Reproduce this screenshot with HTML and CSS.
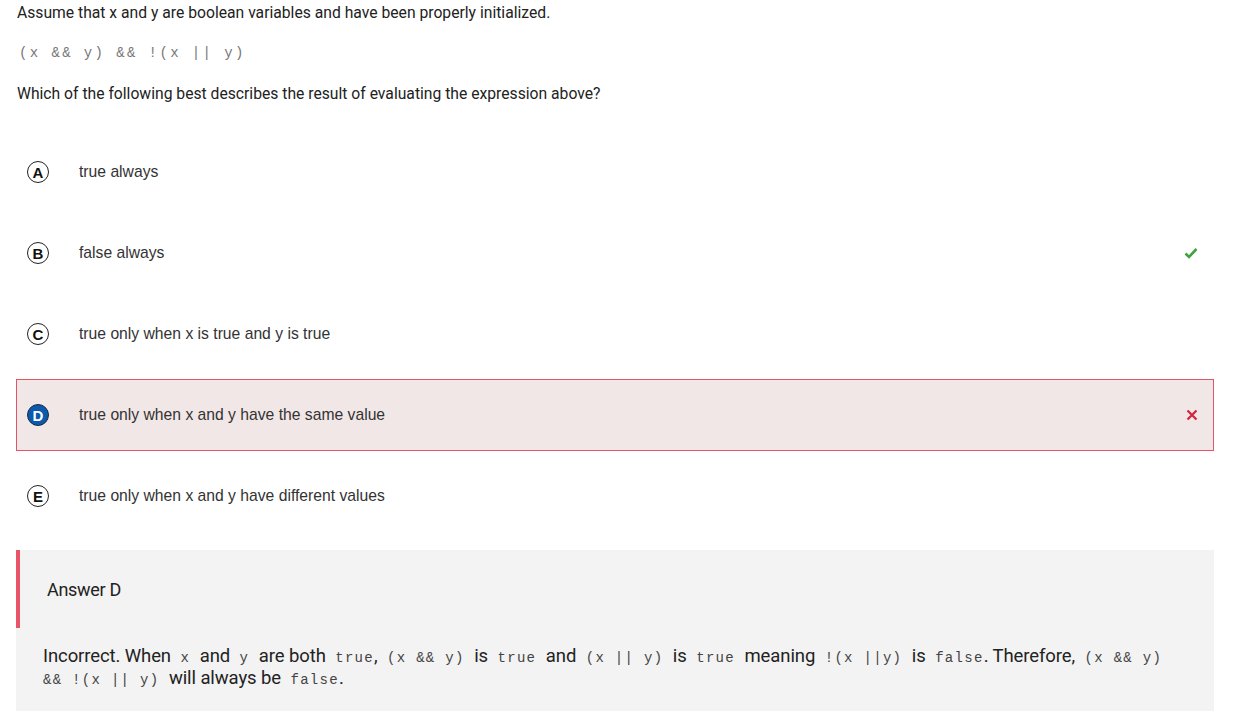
FILE: index.html
```html
<!DOCTYPE html>
<html>
<head>
<meta charset="utf-8">
<link rel="stylesheet" href="styles.css">
</head>
<body>
<div class="page">
  <div class="question">
    <p class="q-text">Assume that x and y are boolean variables and have been properly initialized.</p>
    <p class="q-code">(x &amp;&amp; y) &amp;&amp; !(x || y)</p>
    <p class="q-text">Which of the following best describes the result of evaluating the expression above?</p>
  </div>
  <div class="options">
    <div class="option">
      <span class="letter">A</span>
      <span class="opt-text">true always</span>
    </div>
    <div class="option">
      <span class="letter">B</span>
      <span class="opt-text">false always</span>
      <svg class="mark" width="14" height="12" viewBox="0 0 14 12"><path d="M1.5 6.5 L5 10 L12.5 2" fill="none" stroke="#3ea23e" stroke-width="2.6"/></svg>
    </div>
    <div class="option">
      <span class="letter">C</span>
      <span class="opt-text">true only when x is true and y is true</span>
    </div>
    <div class="option selected">
      <span class="letter filled">D</span>
      <span class="opt-text">true only when x and y have the same value</span>
      <svg class="mark" width="12" height="12" viewBox="0 0 12 12"><path d="M1.5 1.5 L10.5 10.5 M10.5 1.5 L1.5 10.5" fill="none" stroke="#d0283f" stroke-width="2.3"/></svg>
    </div>
    <div class="option">
      <span class="letter">E</span>
      <span class="opt-text">true only when x and y have different values</span>
    </div>
  </div>
  <div class="explanation">
    <div class="exp-head">Answer D</div>
    <div class="exp-body">Incorrect. When <code>x</code> and <code>y</code> are both <code class="tight">true</code>, <code>(x &amp;&amp; y)</code> is <code>true</code> and <code>(x || y)</code> is <code>true</code> meaning <code>!(x ||y)</code> is <code class="tight">false</code>. Therefore, <code>(x &amp;&amp; y)</code> <code class="cont">&amp;&amp; !(x || y)</code> will always be <code class="tight">false</code>.</div>
  </div>
</div>
</body>
</html>
```
FILE: styles.css
```css
html, body {
  margin: 0;
  padding: 0;
  background: #fff;
}
.page {
  width: 1198px;
  padding-left: 16px;
  font-family: Roboto, "Liberation Sans", sans-serif;
  color: #222;
}
.question {
  padding: 3px 0 0 1px;
}
.q-text {
  margin: 0;
  font-size: 15.7px;
  line-height: 20px;
}
.q-code {
  margin: 20px 0 21px 2px;
  font-family: "Liberation Mono", monospace;
  font-size: 14px;
  line-height: 20px;
  letter-spacing: 2.4px;
  color: #777;
}
.options {
  margin-top: 32px;
}
.option {
  height: 70px;
  border: 1px solid transparent;
  margin-bottom: 9px;
  display: flex;
  align-items: center;
  padding-left: 10px;
  padding-right: 15px;
  font-family: "Liberation Sans", Arial, sans-serif;
  font-size: 15.7px;
  color: #333;
}
.option.selected {
  background: #f2e7e7;
  border-color: #e45468;
}
.letter {
  width: 20px;
  height: 20px;
  border: 1.4px solid #222;
  border-radius: 50%;
  display: flex;
  align-items: center;
  justify-content: center;
  font-weight: bold;
  font-size: 15px;
  color: #111;
  flex: none;
}
.letter.filled {
  background: #0b5aad;
  color: #fff;
  border-color: #1a2a40;
}
.opt-text {
  margin-left: 30px;
  flex: 1;
}
.mark {
  flex: none;
}
.explanation {
  margin-top: 18px;
  background: #f3f3f3;
  height: 170px;
}
.exp-head {
  height: 78px;
  border-left: 4px solid #e95468;
  padding-left: 27px;
  display: flex;
  align-items: center;
  font-size: 18px;
  color: #222;
  letter-spacing: -0.3px;
}
.exp-body {
  padding: 17px 45px 0 27px;
  font-size: 18.5px;
  line-height: 22px;
  letter-spacing: -0.1px;
  color: #222;
}
.exp-body code {
  font-family: "Liberation Mono", monospace;
  font-size: 14px;
  line-height: 14px;
  letter-spacing: 1.3px;
  color: #444;
  margin: 0 5px;
}
.exp-body code.tight {
  margin-right: 0;
}
.exp-body code.cont {
  margin-left: 0;
}
```
